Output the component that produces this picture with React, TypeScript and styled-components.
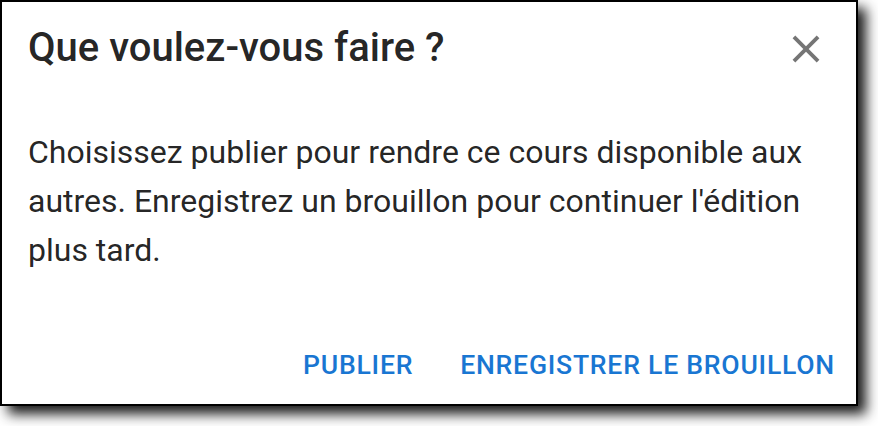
import styled, { createGlobalStyle } from "styled-components";

const GlobalStyle = createGlobalStyle`
  body {
    margin: 0;
    background: #fff;
    font-family: Roboto, "Liberation Sans", sans-serif;
  }
`;

const Page = styled.div`
  width: 878px;
  height: 426px;
  background: #fff;
`;

const Dialog = styled.div`
  box-sizing: border-box;
  width: 858px;
  height: 406px;
  display: flex;
  flex-direction: column;
  background: #fff;
  border: 2px solid #000;
  box-shadow: 8px 8px 12px rgba(0, 0, 0, 0.9);
`;

const Header = styled.div`
  display: flex;
  align-items: flex-start;
  justify-content: space-between;
  padding: 14px 27px 0 26px;
`;

const Title = styled.h2`
  margin: 0;
  font-size: 40px;
  font-weight: 500;
  line-height: 64px;
  color: rgba(0, 0, 0, 0.87);
`;

const CloseButton = styled.button`
  display: flex;
  align-items: center;
  justify-content: center;
  width: 46px;
  height: 46px;
  margin-top: 10px;
  padding: 0;
  border: none;
  background: none;
  color: rgba(0, 0, 0, 0.54);
  cursor: pointer;
`;

const Content = styled.p`
  margin: 48px 0 0;
  padding: 0 26px;
  font-size: 32px;
  line-height: 49px;
  color: rgba(0, 0, 0, 0.87);
`;

const Actions = styled.div`
  display: flex;
  justify-content: flex-end;
  gap: 23px;
  margin-top: auto;
  padding: 0 9px 19px 0;
`;

const ActionButton = styled.button`
  padding: 0 12px;
  border: none;
  background: none;
  font-family: Roboto, "Liberation Sans", sans-serif;
  font-size: 26.6px;
  font-weight: 500;
  line-height: 40px;
  letter-spacing: 0.02857em;
  text-transform: uppercase;
  color: #1976d2;
  cursor: pointer;
`;

function CloseIcon() {
  return (
    <svg width="46" height="46" viewBox="0 0 24 24" fill="currentColor">
      <path d="M19 6.41 17.59 5 12 10.59 6.41 5 5 6.41 10.59 12 5 17.59 6.41 19 12 13.41 17.59 19 19 17.59 13.41 12z" />
    </svg>
  );
}

export default function App() {
  return (
    <Page>
      <GlobalStyle />
      <Dialog>
        <Header>
          <Title>Que voulez-vous faire ?</Title>
          <CloseButton aria-label="Fermer">
            <CloseIcon />
          </CloseButton>
        </Header>
        <Content>
          Choisissez publier pour rendre ce cours disponible aux autres.
          Enregistrez un brouillon pour continuer l'édition plus tard.
        </Content>
        <Actions>
          <ActionButton>Publier</ActionButton>
          <ActionButton>Enregistrer le brouillon</ActionButton>
        </Actions>
      </Dialog>
    </Page>
  );
}
